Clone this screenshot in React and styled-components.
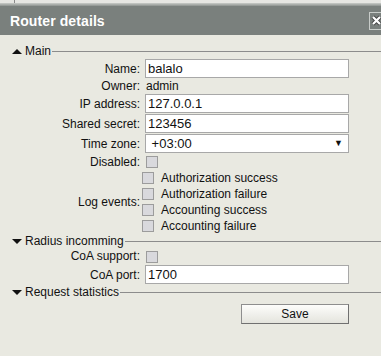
import React from "react";
import styled, { createGlobalStyle } from "styled-components";

const Global = createGlobalStyle`
  html, body { margin: 0; padding: 0; background: #e9e9e1; }
  body { font-family: "Liberation Sans", Arial, sans-serif; font-size: 12px; color: #111; overflow: hidden; }
`;

const Page = styled.div`
  width: 381px;
  height: 356px;
  display: flex;
  flex-direction: column;
  overflow: hidden;
`;

const TopStrip = styled.div`
  height: 3px;
  background: #e6e6e2;
  display: flex;
`;

const StripTick = styled.div`
  margin-left: 14px;
  width: 1px;
  background: #8a8a8a;
`;

const Shade = styled.div`
  height: 3px;
  background: linear-gradient(#c9ccc8, #8d928f);
`;

const TitleBar = styled.div`
  height: 29px;
  background: #7a807d;
  display: flex;
  align-items: center;
  justify-content: space-between;
  padding-left: 10px;
`;

const Title = styled.span`
  color: #fff;
  font-weight: bold;
  font-size: 14px;
  letter-spacing: 0.1px;
`;

const Close = styled.div`
  width: 13px;
  height: 16px;
  margin-right: -3px;
  border: 1px solid #c8ccc9;
  display: flex;
  align-items: center;
  justify-content: center;
`;

const Body = styled.div`
  padding: 9px 0 0 12px;
  display: flex;
  flex-direction: column;
`;

const Legend = styled.div`
  display: flex;
  align-items: center;
  height: 14px;
  gap: 1px;
`;

const ArrowBox = styled.svg`
  width: 10px;
  height: 5px;
  margin-right: 2px;
  flex: none;
`;

const LegendText = styled.span`
  font-size: 12px;
`;

const LegendLine = styled.div`
  flex: 1;
  height: 1px;
  background: #8c8c8c;
`;

const Form = styled.div`
  display: grid;
  grid-template-columns: 128px 204px;
  column-gap: 5px;
  align-items: center;
  margin: ${(p) => p.$m || "0"};
`;

const Label = styled.div`
  text-align: right;
  height: ${(p) => p.$h || 20}px;
  line-height: ${(p) => p.$h || 20}px;
  white-space: nowrap;
`;

const Input = styled.div`
  box-sizing: border-box;
  height: 19px;
  margin-bottom: 1px;
  background: #fff;
  border: 1px solid #a8a8a8;
  font-size: 13px;
  line-height: 17px;
  padding-left: 2px;
  display: flex;
  justify-content: space-between;
  align-items: center;
`;

const Value = styled.div`
  height: 15px;
  line-height: 15px;
  padding-left: 1px;
`;

const SelectArrow = styled.span`
  font-size: 9px;
  margin-right: 5px;
`;

const Check = styled.span`
  display: inline-block;
  box-sizing: border-box;
  width: 12px;
  height: 12px;
  background: #d9d9dd;
  border: 1px solid #9c9c9c;
  margin-left: ${(p) => p.$ml || 0}px;
`;

const CheckCell = styled.div`
  height: ${(p) => p.$h || 16}px;
  display: flex;
  align-items: center;
`;

const Events = styled.div`
  display: flex;
  flex-direction: column;
  margin-left: -3px;
`;

const Event = styled.div`
  height: 16px;
  display: flex;
  align-items: center;
  gap: 7px;
`;

const Footer = styled.div`
  display: flex;
  justify-content: flex-end;
  padding: 5px 32px 0 0;
`;

const SaveButton = styled.button`
  width: 108px;
  height: 20px;
  font-family: "Liberation Sans", Arial, sans-serif;
  font-size: 12px;
  color: #111;
  background: linear-gradient(#fdfdfb, #e4e4dd);
  border: 1px solid #8e8e8e;
  border-right-color: #707070;
  border-bottom-color: #707070;
  padding: 0;
`;

const events = [
  "Authorization success",
  "Authorization failure",
  "Accounting success",
  "Accounting failure",
];

function Arrow({ up }) {
  return (
    <ArrowBox viewBox="0 0 10 5">
      <polygon points={up ? "0,5 10,5 5,0" : "0,0 10,0 5,5"} fill="#111" />
    </ArrowBox>
  );
}

export default function App() {
  return (
    <Page>
      <Global />
      <TopStrip>
        <StripTick />
      </TopStrip>
      <Shade />
      <TitleBar>
        <Title>Router details</Title>
        <Close>
          <svg width="11" height="11" viewBox="0 0 11 11">
            <path d="M2 2 L9 9 M9 2 L2 9" stroke="#444" strokeWidth="4" />
            <path d="M2 2 L9 9 M9 2 L2 9" stroke="#fff" strokeWidth="2.2" />
          </svg>
        </Close>
      </TitleBar>
      <Body>
        <Legend>
          <Arrow up />
          <LegendText>Main</LegendText>
          <LegendLine />
        </Legend>
        <Form $m="1px 0 0 0">
          <Label>Name:</Label>
          <Input>balalo</Input>
          <Label $h={15}>Owner:</Label>
          <Value>admin</Value>
          <Label>IP address:</Label>
          <Input>127.0.0.1</Input>
          <Label>Shared secret:</Label>
          <Input>123456</Input>
          <Label>Time zone:</Label>
          <Input>
            <span>&nbsp;+03:00</span>
            <SelectArrow>▼</SelectArrow>
          </Input>
          <Label $h={16}>Disabled:</Label>
          <CheckCell $h={16}>
            <Check $ml={1} />
          </CheckCell>
          <Label $h={64}>Log events:</Label>
          <Events>
            {events.map((e) => (
              <Event key={e}>
                <Check />
                <span>{e}</span>
              </Event>
            ))}
          </Events>
        </Form>
        <Legend>
          <Arrow />
          <LegendText>Radius incomming</LegendText>
          <LegendLine />
        </Legend>
        <Form>
          <Label $h={17}>CoA support:</Label>
          <CheckCell $h={17}>
            <Check $ml={1} />
          </CheckCell>
          <Label>CoA port:</Label>
          <Input>1700</Input>
        </Form>
        <Legend>
          <Arrow />
          <LegendText>Request statistics</LegendText>
          <LegendLine />
        </Legend>
        <Footer>
          <SaveButton>Save</SaveButton>
        </Footer>
      </Body>
    </Page>
  );
}
